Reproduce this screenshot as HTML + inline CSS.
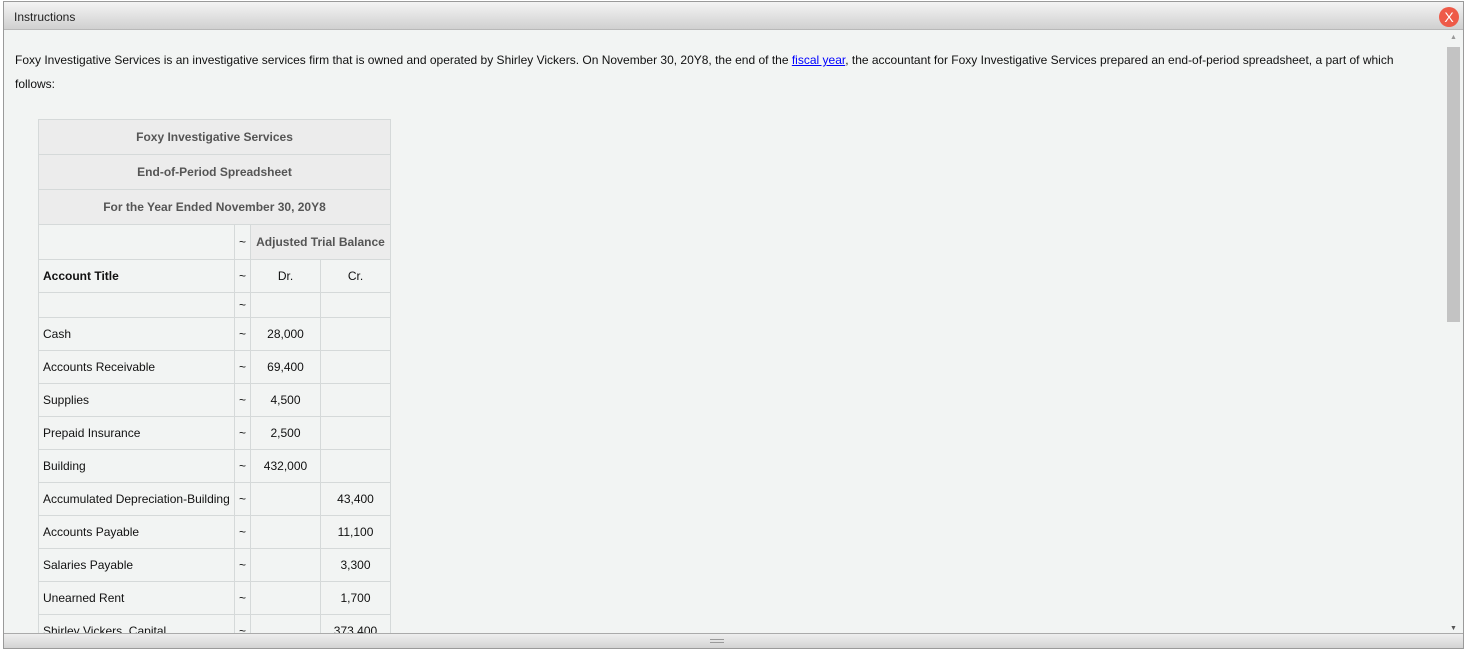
<!DOCTYPE html>
<html><head><style>
*{box-sizing:border-box;margin:0;padding:0}
body{width:1467px;height:649px;overflow:hidden;background:#fff;font-family:"Liberation Sans",Arial,sans-serif;font-size:12px;color:#111}
.win{position:absolute;left:3px;top:1px;width:1461px;height:648px;border:1px solid #9a9a9a;background:#f2f4f3;overflow:hidden}
.title{position:absolute;left:0;top:0;right:0;height:28px;background:linear-gradient(#f4f4f4,#d0d0d0);border-bottom:1px solid #b8b8b8;font-size:12px;line-height:30px;padding-left:10px;color:#222}
.close{position:absolute;right:4px;top:5px;width:20px;height:20px;border-radius:50%;background:#ee5a48;color:#fff;font-size:14px;line-height:20px;text-align:center}
.content{position:absolute;left:0;top:29px;width:1443px;height:603px;overflow:hidden}
p{position:absolute;left:11px;top:17px;width:1420px;line-height:24px;font-size:12px;color:#111}
a{color:#00f}
table{position:absolute;left:34px;top:88px;border-collapse:collapse;width:353px}
td{border:1px solid #d5d9d9;height:33px;font-size:12px;padding:0 4px}
tr.blank td{height:25px}
.h td{background:#ececec;color:#555;font-weight:bold;text-align:center;height:35px}
.t{width:16px;text-align:center;padding:0;font-size:12px}
.n{text-align:center;width:70px}
.sb{position:absolute;right:2px;top:29px;width:15px;height:603px;background:#f2f4f3}
.thumb{position:absolute;left:1px;top:16px;width:13px;height:275px;background:#c3c3c3}
.bot{position:absolute;left:0;bottom:0;right:0;height:15px;background:linear-gradient(#eee,#d3d3d3);border-top:1px solid #aaa}
</style></head><body>
<div class="win">
<div class="title">Instructions<div class="close">X</div></div>
<div class="content">
<p>Foxy Investigative Services is an investigative services firm that is owned and operated by Shirley Vickers. On November 30, 20Y8, the end of the <a href="#">fiscal year</a>, the accountant for Foxy Investigative Services prepared an end-of-period spreadsheet, a part of which follows:</p>
<table>
<tr class="h"><td colspan="4">Foxy Investigative Services</td></tr>
<tr class="h"><td colspan="4">End-of-Period Spreadsheet</td></tr>
<tr class="h"><td colspan="4">For the Year Ended November 30, 20Y8</td></tr>
<tr class="h"><td style="background:#f2f4f3"></td><td class="t" style="background:#f2f4f3;font-weight:normal;color:#111">~</td><td colspan="2">Adjusted Trial Balance</td></tr>
<tr><td style="font-weight:bold">Account Title</td><td class="t">~</td><td class="n">Dr.</td><td class="n">Cr.</td></tr>
<tr class="blank"><td></td><td class="t">~</td><td></td><td></td></tr>
<tr><td>Cash</td><td class="t">~</td><td class="n">28,000</td><td></td></tr>
<tr><td>Accounts Receivable</td><td class="t">~</td><td class="n">69,400</td><td></td></tr>
<tr><td>Supplies</td><td class="t">~</td><td class="n">4,500</td><td></td></tr>
<tr><td>Prepaid Insurance</td><td class="t">~</td><td class="n">2,500</td><td></td></tr>
<tr><td>Building</td><td class="t">~</td><td class="n">432,000</td><td></td></tr>
<tr><td>Accumulated Depreciation-Building</td><td class="t">~</td><td></td><td class="n">43,400</td></tr>
<tr><td>Accounts Payable</td><td class="t">~</td><td></td><td class="n">11,100</td></tr>
<tr><td>Salaries Payable</td><td class="t">~</td><td></td><td class="n">3,300</td></tr>
<tr><td>Unearned Rent</td><td class="t">~</td><td></td><td class="n">1,700</td></tr>
<tr><td>Shirley Vickers, Capital</td><td class="t">~</td><td></td><td class="n">373,400</td></tr>
</table>
</div>
<div class="sb"><div style="font-size:7px;color:#999;text-align:center;line-height:14px">▲</div><div class="thumb"></div><div style="position:absolute;bottom:2px;width:15px;font-size:7px;color:#555;text-align:center">▼</div></div>
<div class="bot"><div style="position:absolute;left:706px;top:5px;width:14px;height:4px;border-top:1px solid #999;border-bottom:1px solid #999"></div></div>
</div>
</body></html>
